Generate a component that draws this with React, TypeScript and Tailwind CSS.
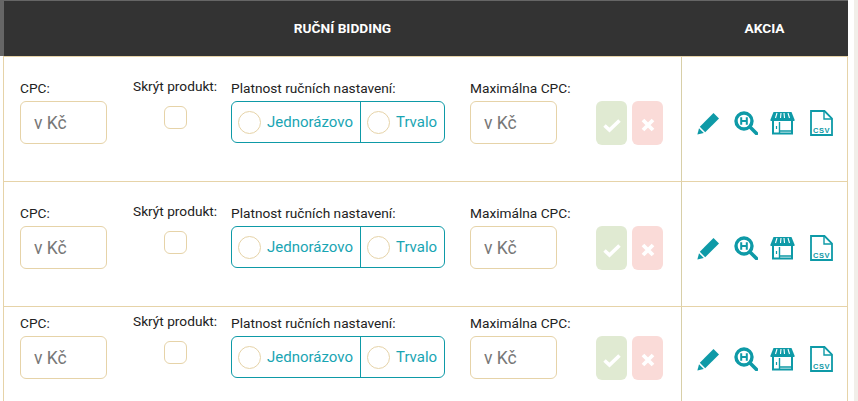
const rows = [
  { h: 'h-[125px]', pt: 'pt-[21px]', iconPt: 'pt-[53px]' },
  { h: 'h-[125px]', pt: 'pt-[21px]', iconPt: 'pt-[53px]' },
  { h: 'h-[95px]', pt: 'pt-[6px]', iconPt: 'pt-[39px]' },
]

function KcInput() {
  return (
    <div className="w-[87px] h-[43px] rounded-[6px] border border-[#e6d3a8] flex items-center pl-[13px] text-[17.5px] text-[#777]">
      v Kč
    </div>
  )
}

function RadioDot() {
  return <span className="w-[23px] h-[23px] rounded-full border border-[#e6d3a8] shrink-0" />
}

function PencilIcon() {
  return (
    <svg width="23" height="23" viewBox="0 0 23 23" fill="#0e9aa7" className="mr-[14px]">
      <path d="M16.5 1 22 6.5 8.2 20.2 2.8 14.8Z" />
      <path d="M2 16.2 6.8 21 .4 22.6Z" />
    </svg>
  )
}

function SearchHIcon() {
  return (
    <svg width="24" height="24" viewBox="0 0 24 24" fill="none" className="mr-[12px]">
      <circle cx="10" cy="10" r="8" stroke="#0e9aa7" strokeWidth="3.4" />
      <path d="M16 16 22.5 22.5" stroke="#0e9aa7" strokeWidth="3.6" strokeLinecap="round" />
      <path d="M7.2 6.2v7.6M12.8 6.2v7.6M7.2 10h5.6" stroke="#0e9aa7" strokeWidth="2" />
    </svg>
  )
}

function ShopIcon() {
  return (
    <svg width="25" height="24" viewBox="0 0 25 24" fill="none" className="mr-[15px]">
      <path d="M3.5 1h18L24.5 8.5v1.5H.5V8.5Z" fill="#0e9aa7" />
      <path d="M7 2 5.5 7M11 2l-.5 5M14 2l.5 5M18 2l1.5 5" stroke="#fff" strokeWidth="1.1" />
      <path d="M3 10v12.5h19V10" stroke="#0e9aa7" strokeWidth="2" />
      <path d="M9.5 11v11.5M9.5 20h12.5" stroke="#0e9aa7" strokeWidth="1.4" />
      <path d="M6.5 15v3" stroke="#0e9aa7" strokeWidth="1.2" />
    </svg>
  )
}

function CsvIcon() {
  return (
    <svg width="23" height="26" viewBox="0 0 23 26" fill="none">
      <path d="M1 1h13.5L22 8.5V25H1Z" stroke="#0e9aa7" strokeWidth="1.8" />
      <path d="M14 1v8h8" stroke="#0e9aa7" strokeWidth="1.4" />
      <text x="3" y="22.5" fontSize="7.5" fontWeight="700" fill="#0e9aa7" fontFamily="Liberation Sans, sans-serif" letterSpacing="0.5">CSV</text>
    </svg>
  )
}

function BidRow({ h, pt, iconPt, last }: { h: string; pt: string; iconPt: string; last: boolean }) {
  return (
    <div className={`flex ${h} ${last ? '' : 'border-b'} border-[#e6d3a8]`}>
      <div className={`w-[677px] shrink-0 flex ${pt} pl-[16px] text-[13.7px] leading-[18px] text-[#222]`}>
        <div className="w-[113px]">
          <div className="mb-[4px] mt-[1px]">CPC:</div>
          <KcInput />
        </div>
        <div className="w-[98px] flex flex-col items-start -mt-[1px]">
          <div className="mb-[11px] whitespace-nowrap">Skrýt produkt:</div>
          <div className="w-[23px] h-[23px] rounded-[6px] border border-[#e6d3a8] ml-[31px]" />
        </div>
        <div className="w-[239px]">
          <div className="mb-[4px] mt-[1px]">Platnost ručních nastavení:</div>
          <div className="w-[214px] h-[42px] rounded-[6px] border border-[#0e9aa7] flex text-[#19a5b3] text-[15px]">
            <div className="w-[129px] border-r border-[#0e9aa7] flex items-center pl-[6px] gap-[6px]">
              <RadioDot />
              <span>Jednorázovo</span>
            </div>
            <div className="flex-1 flex items-center pl-[6px] gap-[6px]">
              <RadioDot />
              <span>Trvalo</span>
            </div>
          </div>
        </div>
        <div className="w-[126px]">
          <div className="mb-[4px] mt-[1px] whitespace-nowrap">Maximálna CPC:</div>
          <KcInput />
        </div>
        <div className="flex gap-[5px] mt-[23px]">
          <div className="w-[31px] h-[44px] rounded-[6px] bg-[#e0ead2] flex items-center justify-center pt-[4px]">
            <svg width="18" height="15" viewBox="0 0 18 15" fill="none">
              <path d="M1.5 7.5 6.5 12 16.5 2.5" stroke="#fff" strokeWidth="3.6" />
            </svg>
          </div>
          <div className="w-[31px] h-[44px] rounded-[6px] bg-[#fadbd8] flex items-center justify-center pt-[4px]">
            <svg width="14" height="14" viewBox="0 0 14 14" fill="none">
              <path d="M2 2 12 12M12 2 2 12" stroke="#fff" strokeWidth="3.8" />
            </svg>
          </div>
        </div>
      </div>
      <div className={`flex-1 border-l border-[#d8cfa8] flex items-start ${iconPt} pl-[15px]`}>
        <div className="flex items-center">
          <PencilIcon />
          <SearchHIcon />
          <ShopIcon />
          <CsvIcon />
        </div>
      </div>
    </div>
  )
}

export default function App() {
  return (
    <div className="w-[858px] h-[401px] overflow-hidden bg-white font-['Roboto','Liberation_Sans',sans-serif] flex">
      <div className="w-[848px] shrink-0">
        <div className="flex h-[56px] bg-[#333] text-white text-[13.7px] font-bold border-t border-[#666] border-l-4 border-l-[#666]">
          <div className="w-[677px] flex items-center justify-center">RUČNÍ BIDDING</div>
          <div className="flex-1 flex items-center justify-center">AKCIA</div>
        </div>
        <div className="border-l border-r border-t border-[#e6d3a8] ml-[3px]">
          {rows.map((r, i) => (
            <BidRow key={i} h={r.h} pt={r.pt} iconPt={r.iconPt} last={i === rows.length - 1} />
          ))}
        </div>
      </div>
      <div className="w-[6px] bg-white" />
      <div className="flex-1 bg-[#f1eee9]" />
    </div>
  )
}
